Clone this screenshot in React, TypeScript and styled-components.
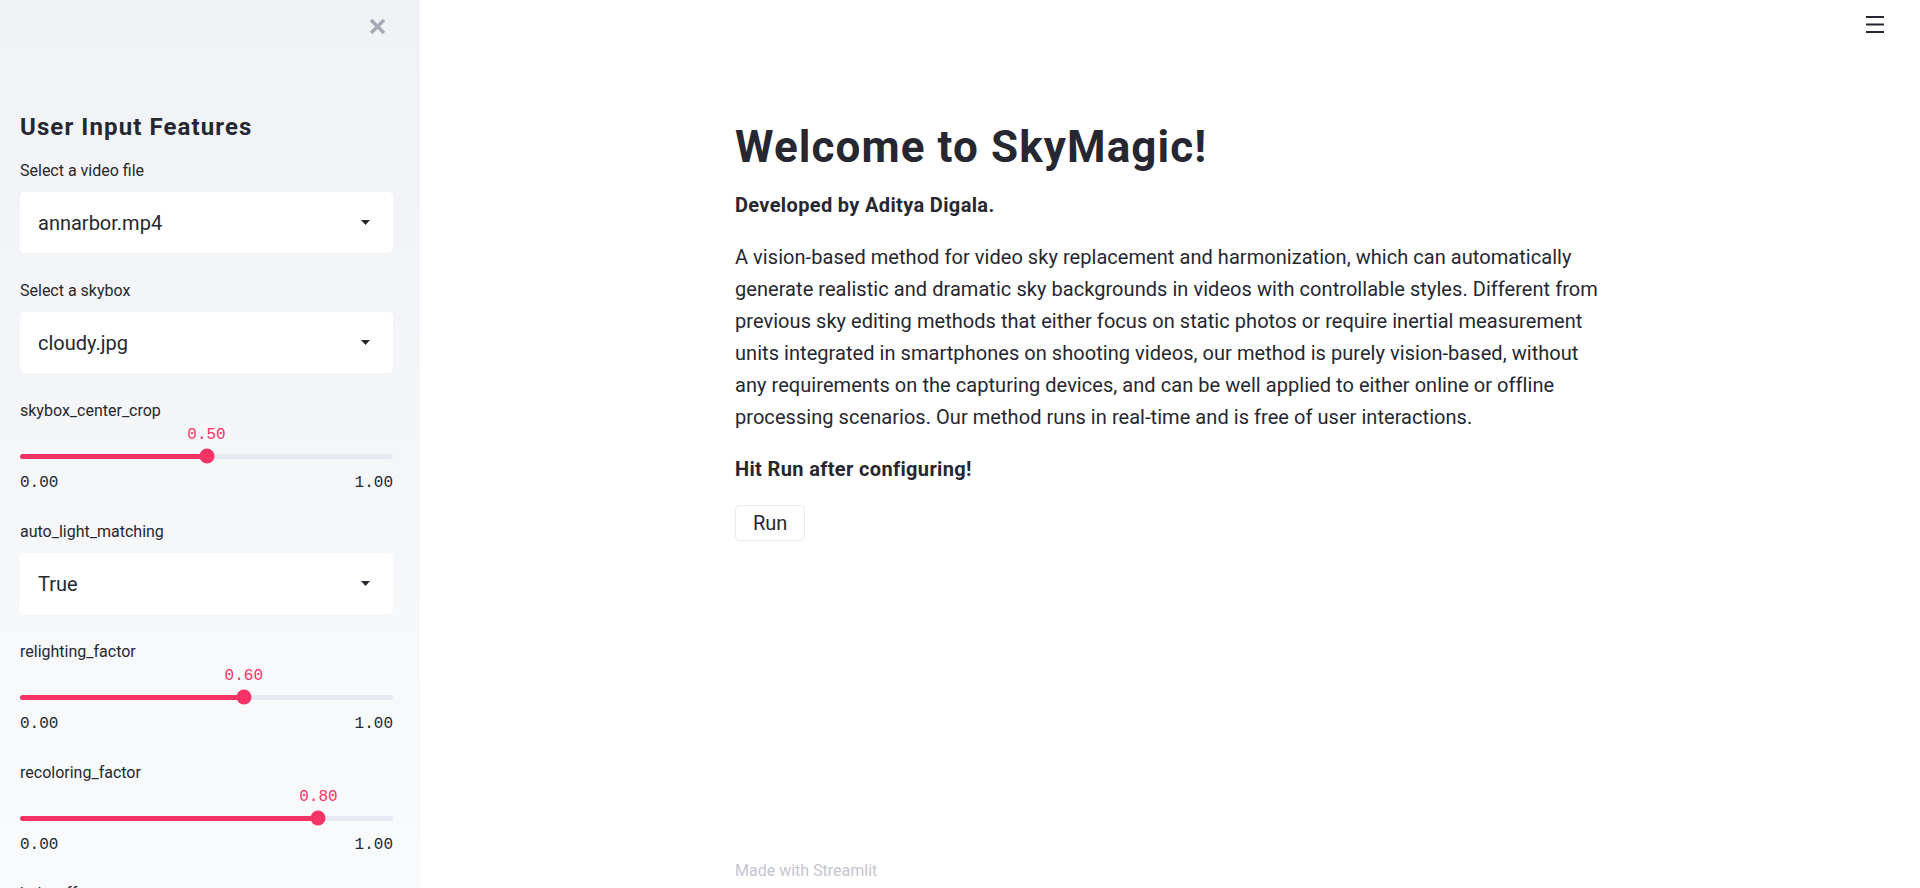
import React from "react";
import styled, { createGlobalStyle } from "styled-components";

const GlobalStyle = createGlobalStyle`
  html, body { margin: 0; padding: 0; height: 100%; }
  body {
    font-family: Roboto, "Liberation Sans", sans-serif;
    color: #262730;
    background: #ffffff;
    overflow: hidden;
  }
  #root { height: 100%; }
  * { box-sizing: border-box; }
`;

const Shell = styled.div`
  display: flex;
  width: 100%;
  height: 888px;
`;

const Sidebar = styled.aside`
  flex: 0 0 420px;
  height: 100%;
  overflow: hidden;
  display: flex;
  flex-direction: column;
  padding: 0 27px 0 20px;
  background: linear-gradient(180deg, #f0f2f6 0%, #f9fafb 100%);
`;

const SidebarTop = styled.div`
  flex: 0 0 111px;
  display: flex;
  justify-content: flex-end;
  align-items: flex-start;
  padding: 18px 7px 0 0;
`;

const CloseButton = styled.button`
  width: 17px;
  height: 17px;
  padding: 0;
  border: none;
  background: none;
  display: flex;
  cursor: pointer;
`;

const SidebarTitle = styled.h2`
  margin: 0 0 18px;
  font-size: 24px;
  line-height: 32px;
  font-weight: 700;
  letter-spacing: 1.1px;
  color: #262730;
`;

const Widget = styled.div<{ $gap: number }>`
  display: flex;
  flex-direction: column;
  flex: none;
  margin-bottom: ${(p) => p.$gap}px;
`;

const Label = styled.label`
  font-size: 16px;
  line-height: 20px;
  color: #262730;
`;

const SelectBox = styled.div`
  margin-top: 11px;
  height: 61px;
  background: #ffffff;
  border-radius: 5px;
  display: flex;
  align-items: center;
  justify-content: space-between;
  padding: 0 23px 0 18px;
  font-size: 20px;
  color: #262730;
`;

const ValueRow = styled.div`
  position: relative;
  margin-top: 4px;
  height: 20px;
`;

const ValueText = styled.span`
  position: absolute;
  top: 0;
  transform: translateX(-50%);
  font-family: "Liberation Mono", "DejaVu Sans Mono", monospace;
  font-size: 16px;
  line-height: 20px;
  color: #f63366;
  white-space: nowrap;
`;

const TrackArea = styled.div`
  height: 22px;
  display: flex;
  align-items: center;
`;

const Track = styled.div`
  position: relative;
  width: 100%;
  height: 5px;
  border-radius: 3px;
  background: #e6eaf1;
`;

const TrackFill = styled.div`
  height: 100%;
  border-radius: 3px;
  background: #f63366;
`;

const Thumb = styled.div`
  position: absolute;
  top: 50%;
  width: 15px;
  height: 15px;
  border-radius: 50%;
  background: #f63366;
  transform: translate(-50%, -50%);
`;

const MinMax = styled.div`
  margin-top: 6px;
  display: flex;
  justify-content: space-between;
  font-family: "Liberation Mono", "DejaVu Sans Mono", monospace;
  font-size: 16px;
  line-height: 20px;
  color: #262730;
`;

const Main = styled.main`
  flex: 1;
  height: 100%;
  display: flex;
  flex-direction: column;
  min-width: 0;
`;

const TopBar = styled.header`
  flex: 0 0 48px;
  display: flex;
  justify-content: flex-end;
  align-items: flex-start;
  padding: 16px 36px 0 0;
`;

const MenuButton = styled.button`
  width: 18px;
  height: 18px;
  padding: 0;
  border: none;
  background: none;
  display: flex;
  cursor: pointer;
`;

const Content = styled.div`
  width: 870px;
  margin: 0 auto;
  padding-top: 73px;
`;

const Title = styled.h1`
  margin: 0;
  font-size: 44px;
  line-height: 52px;
  font-weight: 700;
  letter-spacing: 1.1px;
  color: #262730;
`;

const Text = styled.p<{ $bold?: boolean; $top?: number }>`
  margin: ${(p) => p.$top ?? 0}px 0 20px;
  font-size: 20px;
  line-height: 32px;
  font-weight: ${(p) => (p.$bold ? 700 : 400)};
  letter-spacing: ${(p) => (p.$bold ? "0.35px" : "0.05px")};
  color: #262730;
`;

const RunButton = styled.button`
  height: 36px;
  padding: 0 17px;
  border: 1px solid #e6e9ef;
  border-radius: 5px;
  background: #ffffff;
  font-family: inherit;
  font-size: 20px;
  color: #262730;
  cursor: pointer;
`;

const Footer = styled.footer`
  margin-top: auto;
  width: 870px;
  margin-left: auto;
  margin-right: auto;
  padding-bottom: 7px;
  font-size: 16px;
  line-height: 21px;
  color: #c4c6d0;
`;

const Caret = () => (
  <svg width="9" height="5" viewBox="0 0 9 5">
    <path d="M0 0 L9 0 L4.5 5 Z" fill="#262730" />
  </svg>
);

const Select = ({ label, value }: { label: string; value: string }) => (
  <Widget $gap={28}>
    <Label>{label}</Label>
    <SelectBox>
      <span>{value}</span>
      <Caret />
    </SelectBox>
  </Widget>
);

const Slider = ({ label, value }: { label: string; value: number }) => {
  const pct = `${value * 100}%`;
  return (
    <Widget $gap={29}>
      <Label>{label}</Label>
      <ValueRow>
        <ValueText style={{ left: pct }}>{value.toFixed(2)}</ValueText>
      </ValueRow>
      <TrackArea>
        <Track>
          <TrackFill style={{ width: pct }} />
          <Thumb style={{ left: pct }} />
        </Track>
      </TrackArea>
      <MinMax>
        <span>0.00</span>
        <span>1.00</span>
      </MinMax>
    </Widget>
  );
};

export default function App() {
  return (
    <>
      <GlobalStyle />
      <Shell>
        <Sidebar>
          <SidebarTop>
            <CloseButton aria-label="Close sidebar">
              <svg width="17" height="17" viewBox="0 0 17 17">
                <path d="M2 2 L15 15 M15 2 L2 15" stroke="#a7aab5" strokeWidth="3.4" strokeLinecap="butt" />
              </svg>
            </CloseButton>
          </SidebarTop>
          <SidebarTitle>User Input Features</SidebarTitle>
          <Select label="Select a video file" value="annarbor.mp4" />
          <Select label="Select a skybox" value="cloudy.jpg" />
          <Slider label="skybox_center_crop" value={0.5} />
          <Select label="auto_light_matching" value="True" />
          <Slider label="relighting_factor" value={0.6} />
          <Slider label="recoloring_factor" value={0.8} />
          <Slider label="halo_effect" value={1} />
        </Sidebar>
        <Main>
          <TopBar>
            <MenuButton aria-label="Menu">
              <svg width="18" height="18" viewBox="0 0 18 18">
                <rect x="0" y="0" width="18" height="2" fill="#262730" />
                <rect x="0" y="7.5" width="18" height="2" fill="#262730" />
                <rect x="0" y="15" width="18" height="2" fill="#262730" />
              </svg>
            </MenuButton>
          </TopBar>
          <Content>
            <Title>Welcome to SkyMagic!</Title>
            <Text $bold $top={16}>Developed by Aditya Digala.</Text>
            <Text>
              A vision-based method for video sky replacement and harmonization, which can automatically
              generate realistic and dramatic sky backgrounds in videos with controllable styles. Different
              from previous sky editing methods that either focus on static photos or require inertial
              measurement units integrated in smartphones on shooting videos, our method is purely
              vision-based, without any requirements on the capturing devices, and can be well applied to
              either online or offline processing scenarios. Our method runs in real-time and is free of user
              interactions.
            </Text>
            <Text $bold>Hit Run after configuring!</Text>
            <RunButton>Run</RunButton>
          </Content>
          <Footer>Made with Streamlit</Footer>
        </Main>
      </Shell>
    </>
  );
}
